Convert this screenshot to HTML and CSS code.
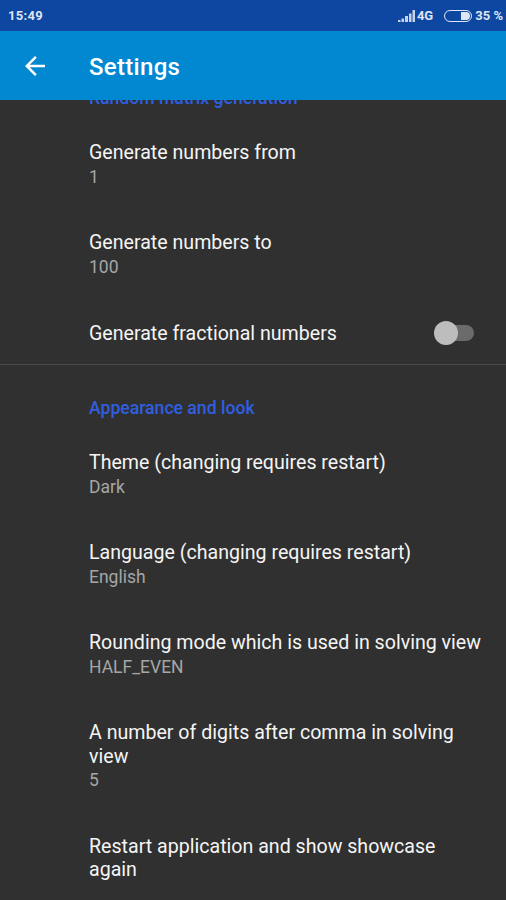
FILE: index.html
```html
<!DOCTYPE html>
<html lang="en">
<head>
<meta charset="utf-8">
<title>Settings</title>
<link rel="stylesheet" href="styles.css">
</head>
<body>
<div class="screen">
  <main class="content">
    <h2 class="cat cat-clipped">Random matrix generation</h2>
    <div class="pref"><div class="t">Generate numbers from</div><div class="s">1</div></div>
    <div class="pref"><div class="t">Generate numbers to</div><div class="s">100</div></div>
    <div class="pref pref-switch"><div class="t">Generate fractional numbers</div>
      <span class="switch"><span class="track"></span><span class="thumb"></span></span></div>
    <hr class="divider">
    <h2 class="cat">Appearance and look</h2>
    <div class="pref"><div class="t">Theme (changing requires restart)</div><div class="s">Dark</div></div>
    <div class="pref"><div class="t">Language (changing requires restart)</div><div class="s">English</div></div>
    <div class="pref"><div class="t">Rounding mode which is used in solving view</div><div class="s">HALF_EVEN</div></div>
    <div class="pref"><div class="t">A number of digits after comma in solving view</div><div class="s">5</div></div>
    <div class="pref"><div class="t">Restart application and show showcase again</div></div>
  </main>
  <header class="head">
    <div class="status">
      <span class="time">15:49</span>
      <span class="indicators">
        <svg class="signal" width="18" height="12" viewBox="0 0 18 12"><path d="M0 10h2.500v2H0zM3.500 8.500H6V12H3.500zM7 6h3v6H7zM11 3.500h2.500V12H11zM14.500 0H17v12h-2.500z" fill="#c9d3e8"/></svg>
        <span class="net">4G</span>
        <span class="battery"><span class="fill"></span></span>
        <span class="pct">35 %</span>
      </span>
    </div>
    <div class="bar">
      <svg class="back" width="30" height="30" viewBox="0 0 24 24"><path d="M20 11H7.830l5.590-5.590L12 4l-8 8 8 8 1.410-1.410L7.830 13H20z" fill="#fff"/></svg>
      <h1 class="title">Settings</h1>
    </div>
  </header>
</div>
</body>
</html>
```
FILE: styles.css
```css
* { box-sizing: border-box; }
html, body { margin: 0; padding: 0; }
body { background: #303030; font-family: Roboto, sans-serif; color: #fff; }
.screen { position: relative; width: 506px; height: 900px; overflow: hidden; background: #303030; }
.head { position: absolute; top: 0; left: 0; right: 0; z-index: 2; }
.status { height: 31px; background: #0d47a1; display: flex; align-items: center; justify-content: space-between; padding: 0 3px 0 8px; font-size: 13px; font-weight: 700; color: #dfe5f2; }
.time { letter-spacing: .3px; }
.indicators { display: flex; align-items: center; }
.signal { margin-right: 1px; }
.net { margin-right: 11px; }
.battery { width: 28px; height: 12px; border: 1px solid #dfe5f2; border-radius: 6px; display: flex; justify-content: flex-end; padding: 1px; margin-right: 3px; }
.fill { width: 9px; background: #dfe5f2; border-radius: 0 4px 4px 0; }
.bar { height: 69px; background: #0288d1; display: flex; align-items: center; padding-left: 20px; }
.title { margin: 2px 0 0 39px; font-size: 24px; font-weight: 500; color: #fff; line-height: 1; letter-spacing: .3px; }
.back { flex: none; }
.content { padding-top: 86.4px; }
.cat { margin: 0; padding-left: 89px; font-size: 17.6px; font-weight: 500; line-height: 24px; color: #2f5fe0; }
.pref { padding: 0 20px 0 89px; margin-top: 42.3px; }
.t { font-size: 19.6px; line-height: 23.7px; color: #f5f5f5; }
.s { font-size: 17.5px; line-height: 24px; color: #a6a6a6; }
.cat + .pref { margin-top: 31px; }
.pref-switch { display: flex; align-items: center; justify-content: space-between; padding-right: 32px; }
.switch { position: relative; width: 40px; height: 24px; display: block; }
.track { position: absolute; left: 6px; right: 0; top: 4px; height: 16px; border-radius: 8px; background: #6b6b6b; }
.thumb { position: absolute; left: 0; top: 0; width: 24px; height: 24px; border-radius: 50%; background: #bdbdbd; }
.divider { margin: 19px 0 0; border: 0; height: 1px; background: #4a4a4a; }
.divider + .cat { margin-top: 30.6px; }
```
